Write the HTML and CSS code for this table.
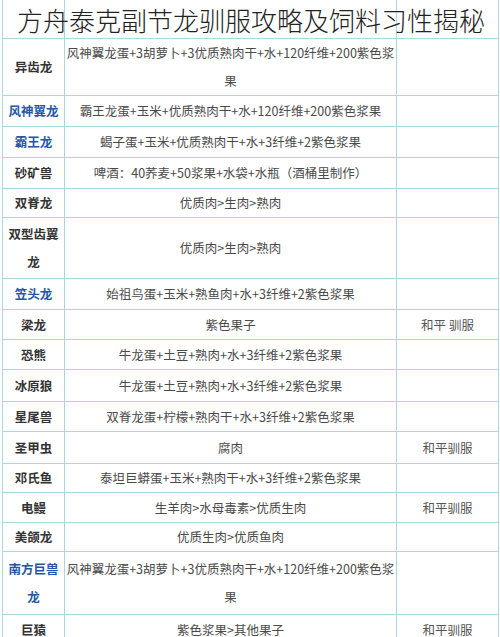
FILE: index.html
```html
<!DOCTYPE html>
<html lang="zh">
<head>
<meta charset="utf-8">
<link rel="stylesheet" href="styles.css">
</head>
<body>
<div class="page">
  <h1 class="title">方舟泰克副节龙驯服攻略及饲料习性揭秘</h1>
  <table class="grid">
    <colgroup><col class="c1"><col class="c2"><col class="c3"></colgroup>
    <tr class="r38"><td></td><td></td><td></td></tr>
    <tr class="r56"><td class="name">异齿龙</td><td class="food">风神翼龙蛋+3胡萝卜+3优质熟肉干+水+120纤维+200紫色浆果</td><td></td></tr>
    <tr class="r31"><td class="name link">风神翼龙</td><td class="food">霸王龙蛋+玉米+优质熟肉干+水+120纤维+200紫色浆果</td><td></td></tr>
    <tr class="r31"><td class="name link">霸王龙</td><td class="food">蝎子蛋+玉米+优质熟肉干+水+3纤维+2紫色浆果</td><td></td></tr>
    <tr class="r31"><td class="name">砂矿兽</td><td class="food">啤酒：40荞麦+50浆果+水袋+水瓶（酒桶里制作）</td><td></td></tr>
    <tr class="r29"><td class="name">双脊龙</td><td class="food">优质肉&gt;生肉&gt;熟肉</td><td></td></tr>
    <tr class="r60"><td class="name">双型齿翼龙</td><td class="food">优质肉&gt;生肉&gt;熟肉</td><td></td></tr>
    <tr class="r31"><td class="name link">笠头龙</td><td class="food">始祖鸟蛋+玉米+熟鱼肉+水+3纤维+2紫色浆果</td><td></td></tr>
    <tr class="r30"><td class="name">梁龙</td><td class="food">紫色果子</td><td class="mode">和平 驯服</td></tr>
    <tr class="r30"><td class="name">恐熊</td><td class="food">牛龙蛋+土豆+熟肉+水+3纤维+2紫色浆果</td><td></td></tr>
    <tr class="r32"><td class="name">冰原狼</td><td class="food">牛龙蛋+土豆+熟肉+水+3纤维+2紫色浆果</td><td></td></tr>
    <tr class="r30"><td class="name">星尾兽</td><td class="food">双脊龙蛋+柠檬+熟肉干+水+3纤维+2紫色浆果</td><td></td></tr>
    <tr class="r32"><td class="name">圣甲虫</td><td class="food">腐肉</td><td class="mode">和平驯服</td></tr>
    <tr class="r29"><td class="name">邓氏鱼</td><td class="food">泰坦巨蟒蛋+玉米+熟肉干+水+3纤维+2紫色浆果</td><td></td></tr>
    <tr class="r30"><td class="name">电鳗</td><td class="food">生羊肉&gt;水母毒素&gt;优质生肉</td><td class="mode">和平驯服</td></tr>
    <tr class="r28"><td class="name">美颌龙</td><td class="food">优质生肉&gt;优质鱼肉</td><td></td></tr>
    <tr class="r62"><td class="name link">南方巨兽龙</td><td class="food">风神翼龙蛋+3胡萝卜+3优质熟肉干+水+120纤维+200紫色浆果</td><td></td></tr>
    <tr class="r30"><td class="name">巨猿</td><td class="food">紫色浆果&gt;其他果子</td><td class="mode">和平驯服</td></tr>
  </table>
</div>
</body>
</html>
```

FILE: styles.css
```css
html, body {
  margin: 0;
  padding: 0;
  background: #ffffff;
}

body {
  font-family: "Noto Sans CJK SC", "Noto Sans", sans-serif;
  overflow: hidden;
}

.page {
  position: relative;
  width: 500px;
  height: 637px;
  overflow: hidden;
}

.title {
  position: absolute;
  top: 2px;
  left: 17px;
  margin: 0;
  font-size: 26px;
  line-height: 36px;
  font-weight: 300;
  color: #222222;
  white-space: nowrap;
  z-index: 2;
}

.grid {
  margin: -1px 0 0 2px;
  width: 496px;
  border-collapse: collapse;
  table-layout: fixed;
}

.c1 { width: 62px; }
.c2 { width: 332px; }
.c3 { width: 102px; }

.grid td {
  border: 1px solid #a9d9e0;
  padding: 0 1px;
  text-align: center;
  vertical-align: middle;
  line-height: 28px;
  overflow: hidden;
}

.grid td.name {
  padding: 0 2px;
  font-size: 12.5px;
  font-weight: bold;
  color: #333333;
}

.grid td.link {
  color: #2456a8;
}

.grid td.food {
  font-size: 12.5px;
  color: #4a4a4a;
}

.grid td.mode {
  font-size: 12.5px;
  color: #555555;
}

.r28 { height: 28px; }
.r29 { height: 29px; }
.r30 { height: 30px; }
.r31 { height: 31px; }
.r32 { height: 32px; }
.r38 { height: 39px; }
.r56 { height: 56px; }
.r60 { height: 61px; }
.r62 { height: 63px; }
```
